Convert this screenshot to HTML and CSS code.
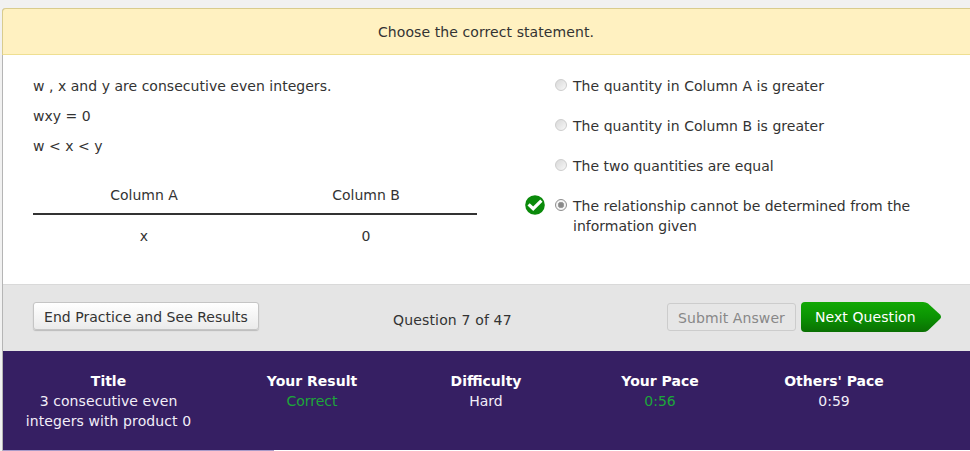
FILE: index.html
```html
<!DOCTYPE html>
<html lang="en">
<head>
<meta charset="utf-8">
<title>Practice Question</title>
<link rel="stylesheet" href="styles.css">
</head>
<body>
<main class="card">
  <header class="prompt">Choose the correct statement.</header>
  <section class="question">
    <div class="stem">
      <p>w , x and y are consecutive even integers.</p>
      <p>wxy = 0</p>
      <p>w &lt; x &lt; y</p>
      <div class="compare">
        <div class="head">Column A</div><div class="head">Column B</div>
        <div class="cell">x</div><div class="cell">0</div>
      </div>
    </div>
    <div class="choices">
      <label class="choice"><span class="mark"></span><span class="radio"></span><span class="text">The quantity in Column A is greater</span></label>
      <label class="choice"><span class="mark"></span><span class="radio"></span><span class="text">The quantity in Column B is greater</span></label>
      <label class="choice"><span class="mark"></span><span class="radio"></span><span>The two quantities are equal</span></label>
      <label class="choice"><span class="mark"><svg width="20" height="20" viewBox="0 0 20 20"><circle cx="10" cy="10" r="9.8" fill="#0b8a0b"/><path d="M3.600 9.300 8.200 13.700 16.400 5.600" fill="none" stroke="#fff" stroke-width="3.200"/></svg></span><span class="radio on"></span><span>The relationship cannot be determined from the<br>information given</span></label>
    </div>
  </section>
  <nav class="actions">
    <button class="btn end">End Practice and See Results</button>
    <span class="count">Question 7 of 47</span>
    <button class="btn submit" disabled>Submit Answer</button>
    <button class="next"><svg class="arrow" width="140" height="30" viewBox="0 0 140 30"><defs><linearGradient id="g" x2="0" y2="1"><stop offset="0" stop-color="#12a805"/><stop offset=".5" stop-color="#0b9303"/><stop offset="1" stop-color="#0a7003"/></linearGradient></defs><path d="M4 0H122Q125 0 127 1.500L139 12.500Q141 15 139 17L127 28.500Q125 30 122 30H4Q0 30 0 26V4Q0 0 4 0Z" fill="url(#g)"/></svg><span class="next-text">Next Question</span></button>
  </nav>
  <footer class="stats">
    <div class="stat"><b>Title</b><span class="name">3 consecutive even<br>integers with product 0</span></div>
    <div class="stat"><b>Your Result</b><span class="good">Correct</span></div>
    <div class="stat"><b>Difficulty</b><span>Hard</span></div>
    <div class="stat"><b>Your Pace</b><span class="good">0:56</span></div>
    <div class="stat"><b>Others' Pace</b><span>0:59</span></div>
  </footer>
  <div class="strip"></div>
</main>
</body>
</html>
```
FILE: styles.css
```css
* { box-sizing: border-box; }
body { margin: 0; padding: 8px 0 0 2px; height: 451px; overflow: hidden; background: #f1f1f1; color: #333; font: 14px/20px "DejaVu Sans", sans-serif; }
.card { width: 980px; border-left: 1px solid #b5b5b5; border-radius: 4px 0 0 0; }
.prompt { height: 47px; padding: 13px 12px 0 0; margin-left: -1px; text-align: center; letter-spacing: .09px; background: #fff1c1; border: 1px solid #d9cc8d; border-bottom-color: #efdf91; border-radius: 4px 0 0 0; }
.question { height: 229px; padding: 21px 0 0 30px; display: flex; background: #fff; }
.stem { width: 444px; }
.stem p { margin: 0 0 10px; letter-spacing: .03px; }
.compare { margin-top: 29px; display: grid; grid-template-columns: 1fr 1fr; text-align: center; }
.head { height: 30px; border-bottom: 2px solid #333; }
.cell { padding-top: 11px; }
.choices { margin-left: 48px; display: flex; flex-direction: column; gap: 20px; }
.choice { display: flex; }
.text { letter-spacing: .04px; }
.mark { width: 20px; height: 20px; margin: -1px 10px 0 0; }
.mark svg { display: block; }
.radio { width: 12px; height: 12px; margin: 3px 6px 0 0; border: 1px solid #cdcdcd; border-radius: 50%; background: linear-gradient(135deg, #d8d8d8, #f8f8f8); }
.radio.on { border-color: #8d8d8d; background: radial-gradient(circle, #888 0 2px, #aaa 3px, #f4f4f4 3.5px); }
.actions { height: 67px; padding: 17px 0 0 30px; display: flex; align-items: flex-start; background: #e5e5e5; border-top: 1px solid #d9d9d9; }
button { font: inherit; color: inherit; padding: 0; white-space: nowrap; }
.btn { height: 28px; border: 1px solid #c5c5c5; border-radius: 3px; }
.end { width: 226px; padding-top: 2px; letter-spacing: .02px; background: linear-gradient(#fff, #ebebeb); box-shadow: 0 1px 1px #bbb; }
.count { width: 120px; margin: 8px 0 0 134px; letter-spacing: .16px; white-space: nowrap; }
.submit { width: 129px; margin: 1px 5px 0 154px; padding-top: 2px; letter-spacing: .1px; color: #888; background: #e6e6e6; border-color: #ccc; }
.next { position: relative; width: 140px; height: 30px; border: 0; background: none; color: #fff; text-align: left; padding-left: 14px; letter-spacing: .08px; }
.arrow { position: absolute; left: 0; top: 0; }
.next-text { position: relative; }
.stats { height: 99px; padding: 20px 0 0 9px; display: grid; grid-template-columns: 193px repeat(4, 174px); background: #361f63; color: #f2eef8; text-align: center; }
.stat:not(:first-child) { padding-left: 20px; margin-right: -20px; }
.stat b { display: block; color: #fff; }
.name { letter-spacing: .09px; }
.good { color: #1da63a; }
.strip { height: 1px; background: linear-gradient(90deg, #a99bc9 271px, #fff 271px); }
```
